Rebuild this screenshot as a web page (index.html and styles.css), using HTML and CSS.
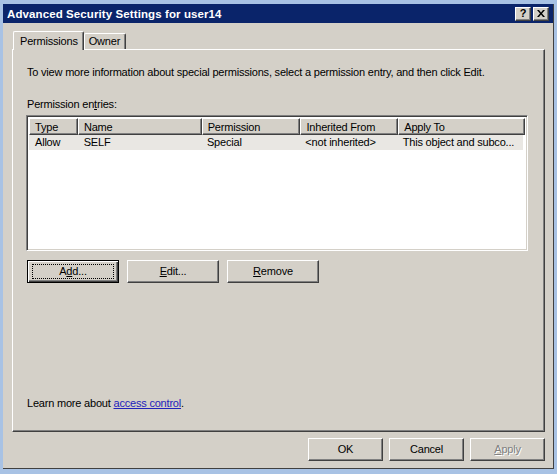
FILE: index.html
```html
<!DOCTYPE html>
<html>
<head>
<meta charset="utf-8">
<link rel="stylesheet" href="styles.css">
</head>
<body>
<div class="frame">
  <div class="window">
    <div class="titlebar">
      <span class="title">Advanced Security Settings for user14</span>
      <div class="tb-buttons">
        <span class="tb-btn">?</span>
        <span class="tb-btn close">
          <svg width="8" height="7" viewBox="0 0 8 7"><path d="M0 0h2l2 2.5L6 0h2L5 3.5 8 7H6L4 4.5 2 7H0l3-3.5z" fill="#000"/></svg>
        </span>
      </div>
    </div>
    <div class="content">
      <div class="tabs">
        <div class="tab active">Permissions</div>
        <div class="tab">Owner</div>
      </div>
      <div class="panel">
        <p class="intro">To view more information about special permissions, select a permission entry, and then click Edit.</p>
        <p class="label">Permission en<u>t</u>ries:</p>
        <div class="listbox">
          <div class="header">
            <div class="hcell c1">Type</div>
            <div class="hcell c2">Name</div>
            <div class="hcell c3">Permission</div>
            <div class="hcell c4">Inherited From</div>
            <div class="hcell c5">Apply To</div>
          </div>
          <div class="row">
            <div class="cell c1">Allow</div>
            <div class="cell c2">SELF</div>
            <div class="cell c3">Special</div>
            <div class="cell c4">&lt;not inherited&gt;</div>
            <div class="cell c5">This object and subco...</div>
          </div>
        </div>
        <div class="actions">
          <div class="btn default"><span class="focus">A<u>d</u>d...</span></div>
          <div class="btn"><u>E</u>dit...</div>
          <div class="btn"><u>R</u>emove</div>
        </div>
        <div class="spacer"></div>
        <p class="learn">Learn more about <a class="link">access control</a>.</p>
      </div>
      <div class="footer">
        <div class="btn fbtn">OK</div>
        <div class="btn fbtn">Cancel</div>
        <div class="btn fbtn disabled"><u>A</u>pply</div>
      </div>
    </div>
  </div>
</div>
</body>
</html>
```
FILE: styles.css
```css
html, body {
  margin: 0;
  padding: 0;
  background: #a8c2e4;
}
.frame {
  width: 557px;
  height: 474px;
  box-sizing: border-box;
  padding: 4px 3px 5px 3px;
  background: #a8c2e4;
}
.window {
  height: 100%;
  box-sizing: border-box;
  background: #d4d0c8;
  border-right: 1px solid #404040;
  border-bottom: 1px solid #404040;
  display: flex;
  flex-direction: column;
  font-family: "Liberation Sans", Arial, sans-serif;
  font-size: 11px;
  letter-spacing: -0.2px;
  color: #000;
}
.titlebar {
  height: 19px;
  background: #0a246a;
  display: flex;
  align-items: center;
  justify-content: space-between;
  padding: 0 4px 0 4px;
}
.title {
  color: #fff;
  font-weight: bold;
  font-size: 11.5px;
  letter-spacing: 0.1px;
}
.tb-buttons {
  display: flex;
  gap: 2px;
}
.tb-btn {
  width: 16px;
  height: 14px;
  box-sizing: border-box;
  background: #d4d0c8;
  border-top: 1px solid #fff;
  border-left: 1px solid #fff;
  border-right: 1px solid #404040;
  border-bottom: 1px solid #404040;
  box-shadow: inset -1px -1px 0 #808080;
  display: flex;
  align-items: center;
  justify-content: center;
  font-weight: bold;
  font-size: 11px;
  line-height: 1;
}
.content {
  flex: 1;
  display: flex;
  flex-direction: column;
  padding: 8px 8px 0 9px;
}
.tabs {
  display: flex;
  height: 18px;
  align-items: flex-end;
  padding-left: 1px;
  position: relative;
  z-index: 1;
}
.tab {
  height: 16px;
  box-sizing: border-box;
  border-top: 1px solid #fff;
  border-left: 1px solid #fff;
  border-right: 1px solid #404040;
  box-shadow: inset -1px 0 0 #808080;
  border-radius: 2px 2px 0 0;
  padding: 1px 5px 0 4px;
  background: #d4d0c8;
}
.tab.active {
  height: 19px;
  margin-bottom: -1px;
  padding: 3px 5px 0 6px;
}
.panel {
  height: 383px;
  box-sizing: border-box;
  border-top: 1px solid #fff;
  border-left: 1px solid #fff;
  border-right: 1px solid #404040;
  border-bottom: 1px solid #404040;
  box-shadow: inset -1px -1px 0 #808080;
  padding: 16px 16px 0 14px;
  display: flex;
  flex-direction: column;
}
p { margin: 0; }
.intro { height: 13px; line-height: 13px; }
.label { margin-top: 19px; height: 13px; line-height: 13px; }
.listbox {
  margin-top: 4px;
  margin-left: -1px;
  height: 136px;
  box-sizing: border-box;
  border-top: 1px solid #808080;
  border-left: 1px solid #808080;
  border-right: 1px solid #fff;
  border-bottom: 1px solid #fff;
  box-shadow: inset 1px 1px 0 #404040, inset -1px -1px 0 #d4d0c8;
  background: #fff;
  padding: 2px;
}
.header, .row {
  display: flex;
}
.hcell {
  height: 17px;
  box-sizing: border-box;
  background: #d4d0c8;
  border-top: 1px solid #fff;
  border-left: 1px solid #fff;
  border-right: 1px solid #404040;
  border-bottom: 1px solid #404040;
  box-shadow: inset -1px -1px 0 #808080;
  padding: 2px 0 0 5px;
  line-height: 13px;
}
.c1 { width: 49px; }
.c2 { width: 124px; }
.c3 { width: 99px; }
.c4 { width: 98px; }
.c5 { width: 127px; }
.row {
  background: #e9e7e3;
  height: 15px;
  margin-right: 2px;
}
.cell {
  box-sizing: border-box;
  padding: 1px 0 0 6px;
  line-height: 13px;
  white-space: nowrap;
  overflow: hidden;
}
.actions {
  display: flex;
  gap: 8px;
  margin-top: 9px;
}
.btn {
  width: 92px;
  height: 23px;
  box-sizing: border-box;
  background: #d4d0c8;
  border-top: 1px solid #fff;
  border-left: 1px solid #fff;
  border-right: 1px solid #404040;
  border-bottom: 1px solid #404040;
  box-shadow: inset -1px -1px 0 #808080;
  display: flex;
  align-items: center;
  justify-content: center;
  line-height: 13px;
}
.btn.default {
  border: 1px solid #000;
  box-shadow: inset 1px 1px 0 #fff, inset -1px -1px 0 #404040, inset -2px -2px 0 #808080;
}
.focus {
  display: block;
  width: 82px;
  height: 15px;
  box-sizing: border-box;
  border: 1px dotted #000;
  text-align: center;
  line-height: 13px;
}
.spacer { flex: 1; }
.learn {
  height: 13px;
  line-height: 13px;
  margin-bottom: 21px;
}
.link {
  color: #2222bb;
  text-decoration: underline;
}
.footer {
  display: flex;
  justify-content: flex-end;
  gap: 6px;
  padding-top: 6px;
  padding-right: 0;
}
.fbtn {
  width: 75px;
  height: 23px;
}
.disabled {
  color: #808080;
  text-shadow: 1px 1px 0 #fff;
}
```
